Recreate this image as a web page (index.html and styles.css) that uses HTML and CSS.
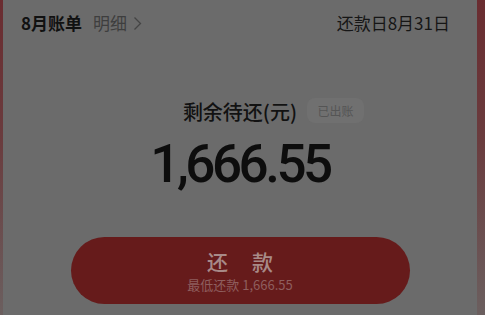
FILE: index.html
```html
<!DOCTYPE html>
<html lang="zh">
<head>
<meta charset="utf-8">
<link rel="stylesheet" href="styles.css">
</head>
<body>
<div class="page">
  <div class="card">
    <div class="header">
      <div class="bill">
        <span class="bill-title">8月账单</span>
        <span class="detail">明细<svg class="chev" width="9" height="15" viewBox="0 0 9 15"><path d="M1.5 1.5 L7.5 7.5 L1.5 13.5" fill="none" stroke="#444" stroke-width="1.3"/></svg></span>
      </div>
      <div class="due">还款日8月31日</div>
    </div>
    <div class="title-row">
      <span class="title">剩余待还(元)<span class="badge">已出账</span></span>
    </div>
    <div class="amount">1,666.55</div>
    <div class="pay-btn">
      <div class="pay-label">还款</div>
      <div class="pay-sub">最低还款 1,666.55</div>
    </div>
  </div>
</div>
</body>
</html>
```

FILE: styles.css
```css
* { box-sizing: border-box; }
html, body { margin: 0; padding: 0; }
body {
  width: 485px;
  height: 315px;
  overflow: hidden;
  font-family: "Noto Sans CJK SC", "Noto Sans", sans-serif;
}
.page {
  height: 315px;
  padding: 0 8px 0 3px;
  background: linear-gradient(to bottom, #6a2c30 0%, #6a3c3e 45%, #6b5f5f 100%);
}
.card {
  height: 315px;
  background: #6b6b6b;
  display: flex;
  flex-direction: column;
}
.header {
  display: flex;
  justify-content: space-between;
  align-items: center;
  padding: 13px 27px 0 18px;
  font-size: 17px;
  line-height: 20px;
}
.bill { display: flex; align-items: center; }
.bill-title { font-weight: 700; color: #111; }
.detail {
  margin-left: 11px;
  color: #3e3e3e;
  display: flex;
  align-items: center;
}
.chev { margin-left: 6px; }
.due { color: #161616; }
.title-row {
  display: flex;
  justify-content: center;
  margin-top: 67px;
}
.title {
  position: relative;
  font-size: 20px;
  line-height: 24px;
  font-weight: 500;
  color: #121212;
}
.badge {
  position: absolute;
  left: calc(100% + 10px);
  top: -2px;
  width: 57px;
  height: 25px;
  border-radius: 8px;
  background: #707070;
  color: #555;
  font-size: 12px;
  font-weight: 400;
  line-height: 25px;
  text-align: center;
}
.amount {
  margin-top: 14px;
  text-align: center;
  font-family: Roboto, "Liberation Sans", sans-serif;
  font-weight: 500;
  font-size: 53px;
  line-height: 53px;
  letter-spacing: -3.5px;
  color: #0d0d0d;
}
.pay-btn {
  margin: 46px auto 0;
  width: 339px;
  height: 67px;
  border-radius: 34px;
  background: #661b1b;
  display: flex;
  flex-direction: column;
  align-items: center;
  justify-content: center;
}
.pay-label {
  font-size: 21px;
  line-height: 23px;
  font-weight: 500;
  letter-spacing: 24px;
  margin-right: -24px;
  color: #a88a88;
}
.pay-sub {
  margin-top: 4px;
  font-size: 13px;
  line-height: 15px;
  color: #8e5e5e;
}
```
